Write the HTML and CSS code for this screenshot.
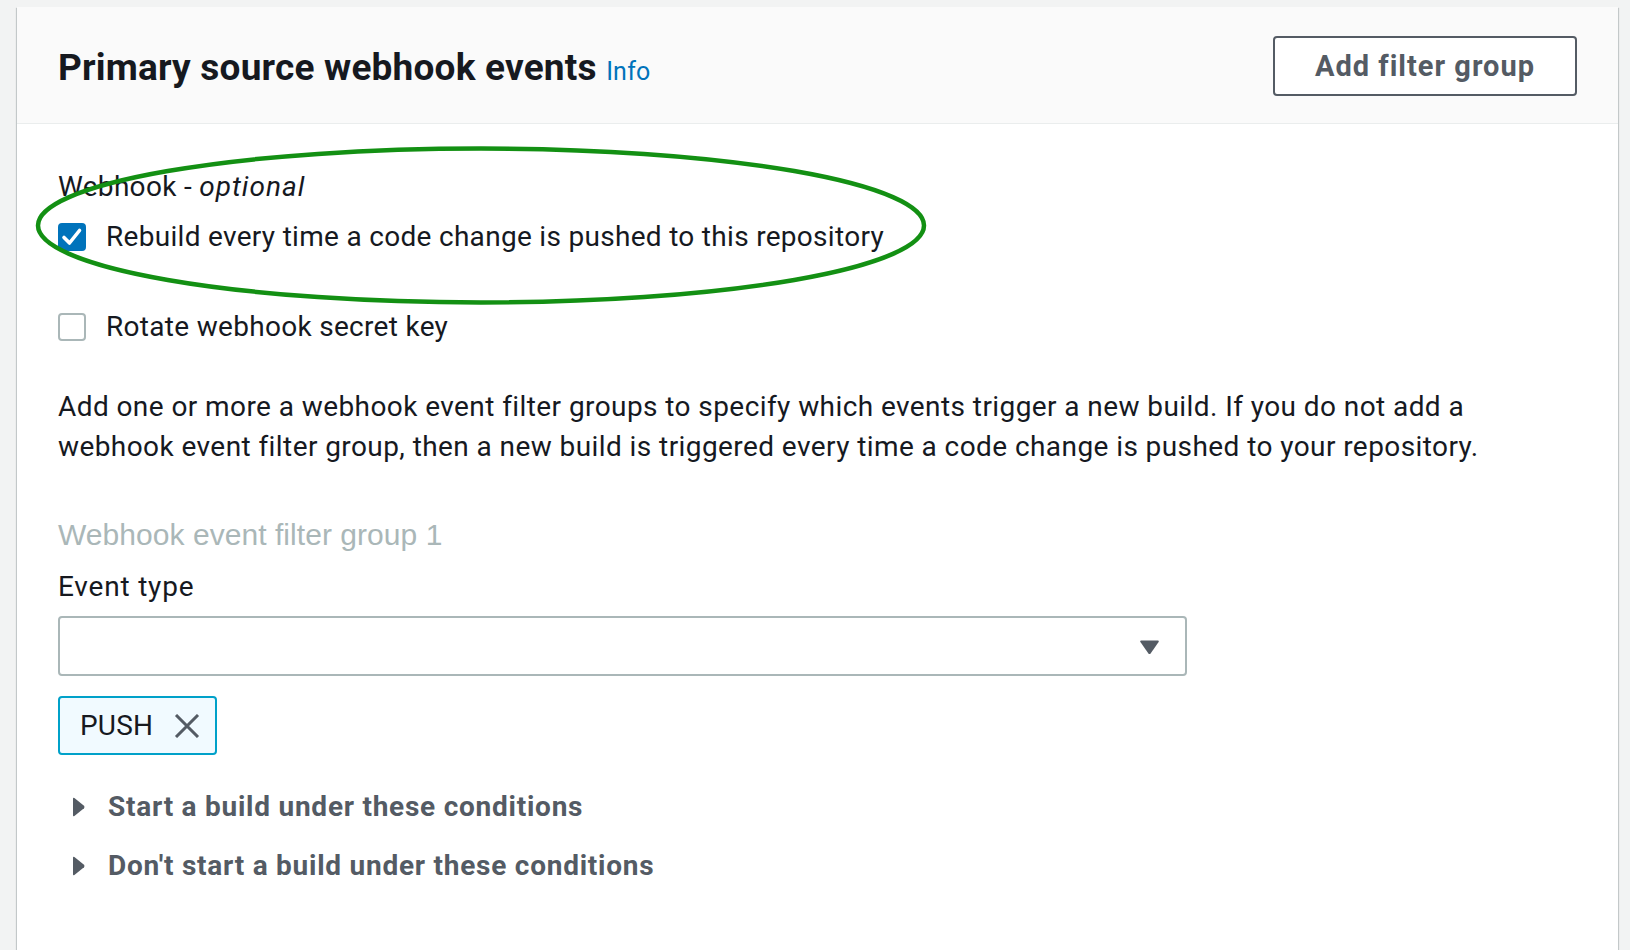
FILE: index.html
```html
<!DOCTYPE html>
<html lang="en">
<head>
<meta charset="utf-8">
<title>Primary source webhook events</title>
<link rel="stylesheet" href="styles.css">
</head>
<body>
<div class="card">
  <div class="card-header">
    <h2 class="title">Primary source webhook events <a class="info" href="#">Info</a></h2>
    <button class="btn" type="button">Add filter group</button>
  </div>
  <div class="card-body">
    <div class="field-label">Webhook - <i>optional</i></div>
    <div class="check-row first">
      <span class="cb checked"><svg viewBox="0 0 28 28" width="28" height="28"><polyline points="6,14.5 11.5,20 21.5,7.5" fill="none" stroke="#fff" stroke-width="3.6" stroke-linecap="round" stroke-linejoin="round"/></svg></span>
      <span class="cb-label">Rebuild every time a code change is pushed to this repository</span>
    </div>
    <div class="check-row second">
      <span class="cb"></span>
      <span class="cb-label">Rotate webhook secret key</span>
    </div>
    <p class="desc">Add one or more a webhook event filter groups to specify which events trigger a new build. If you do not add a webhook event filter group, then a new build is triggered every time a code change is pushed to your repository.</p>
    <div class="group-title">Webhook event filter group 1</div>
    <div class="field-label event">Event type</div>
    <div class="select">
      <svg class="caret" viewBox="0 0 21 16" width="21" height="16"><path d="M2 1.5 L19 1.5 Q20.5 1.5 19.6 3 L11.6 14.4 Q10.5 15.8 9.4 14.4 L1.4 3 Q0.5 1.5 2 1.5 Z" fill="#545b64"/></svg>
    </div>
    <div class="tag">
      <span class="tag-text">PUSH</span>
      <svg class="tag-x" viewBox="0 0 28 24" width="28" height="24"><path d="M3 1 L25 23 M25 1 L3 23" stroke="#545b64" stroke-width="3" fill="none"/></svg>
    </div>
    <div class="expander first-exp">
      <svg class="tri" viewBox="0 0 13 20" width="13" height="20"><path d="M1 1.8 Q1 0.2 2.4 1 L12 8.8 Q13 10 12 11.2 L2.4 19 Q1 19.8 1 18.2 Z" fill="#545b64"/></svg>
      <span>Start a build under these conditions</span>
    </div>
    <div class="expander">
      <svg class="tri" viewBox="0 0 13 20" width="13" height="20"><path d="M1 1.8 Q1 0.2 2.4 1 L12 8.8 Q13 10 12 11.2 L2.4 19 Q1 19.8 1 18.2 Z" fill="#545b64"/></svg>
      <span>Don't start a build under these conditions</span>
    </div>
  </div>
</div>
<svg class="annotation" viewBox="0 0 1630 950" width="1630" height="950">
  <ellipse cx="481" cy="225.5" rx="443" ry="77" fill="none" stroke="#139013" stroke-width="4.5"/>
</svg>
</body>
</html>
```

FILE: styles.css
```css
html, body {
  margin: 0;
  padding: 0;
}
body {
  background: #f2f3f3;
  font-family: Roboto, "Liberation Sans", sans-serif;
  color: #16191f;
  width: 1630px;
  height: 950px;
  overflow: hidden;
  position: relative;
}
.card {
  margin: 7px 0 0 17px;
  width: 1601px;
  height: 980px;
  background: #ffffff;
  box-shadow: 0 1px 1px 0 rgba(0, 28, 36, 0.3), 1px 1px 1px 0 rgba(0, 28, 36, 0.15), -1px 1px 1px 0 rgba(0, 28, 36, 0.15);
}
.card-header {
  height: 116px;
  background: #fafafa;
  border-bottom: 1px solid #eaeded;
  display: flex;
  align-items: center;
  justify-content: space-between;
  padding: 0 41px;
}
.title {
  margin: 0;
  font-size: 37px;
  font-weight: 700;
  line-height: 44px;
  letter-spacing: 0.2px;
  color: #16191f;
  padding-top: 9px;
}
.info {
  font-size: 25px;
  font-weight: 400;
  color: #0073bb;
  text-decoration: none;
  letter-spacing: 0.2px;
}
.btn {
  height: 60px;
  padding: 0 40px;
  border: 2px solid #545b64;
  border-radius: 4px;
  background: #ffffff;
  font-family: Roboto, "Liberation Sans", sans-serif;
  font-size: 29px;
  font-weight: 700;
  color: #545b64;
  letter-spacing: 1px;
  margin-top: 1px;
}
.card-body {
  padding: 43px 41px 0;
  font-size: 28px;
  line-height: 40px;
}
.field-label {
  font-size: 28px;
  line-height: 40px;
  letter-spacing: 0.3px;
}
.field-label i {
  font-style: italic;
  letter-spacing: 1px;
}
.check-row {
  display: flex;
  align-items: center;
  height: 40px;
  letter-spacing: 0.3px;
}
.check-row.first {
  margin-top: 10px;
}
.check-row.second {
  margin-top: 50px;
}
.cb {
  width: 28px;
  height: 28px;
  box-sizing: border-box;
  border: 2px solid #aab7b8;
  border-radius: 4px;
  background: #ffffff;
  margin-right: 20px;
  flex: none;
  display: flex;
}
.cb.checked {
  background: #0073bb;
  border-color: #0073bb;
}
.cb.checked svg {
  margin: -2px;
}
.desc {
  margin: 40px 0 0;
  max-width: 1440px;
  line-height: 40px;
  letter-spacing: 0.42px;
}
.group-title {
  margin-top: 50px;
  font-family: "Liberation Sans", Arial, sans-serif;
  font-size: 30px;
  line-height: 36px;
  color: #aab7b8;
  letter-spacing: 0.05px;
}
.field-label.event {
  margin-top: 14px;
  letter-spacing: 0.8px;
}
.select {
  margin-top: 9px;
  width: 1129px;
  height: 60px;
  box-sizing: border-box;
  border: 2px solid #aab7b8;
  border-radius: 4px;
  display: flex;
  align-items: center;
  justify-content: flex-end;
  padding-right: 25px;
}
.caret {
  display: block;
  margin-top: 1px;
}
.tag {
  margin-top: 20px;
  width: 159px;
  height: 59px;
  box-sizing: border-box;
  border: 2px solid #00a1c9;
  border-radius: 4px;
  background: #f1faff;
  display: flex;
  align-items: center;
  padding-left: 20px;
}
.tag-text {
  letter-spacing: 0.2px;
}
.tag-x {
  display: block;
  margin-left: 20px;
}
.expander {
  display: flex;
  align-items: center;
  height: 40px;
  margin-top: 19px;
  font-weight: 700;
  color: #545b64;
  letter-spacing: 0.75px;
}
.expander.first-exp {
  margin-top: 32px;
}
.tri {
  display: block;
  margin-left: 14px;
  margin-right: 23px;
}
.annotation {
  position: absolute;
  left: 0;
  top: 0;
  pointer-events: none;
}
```
